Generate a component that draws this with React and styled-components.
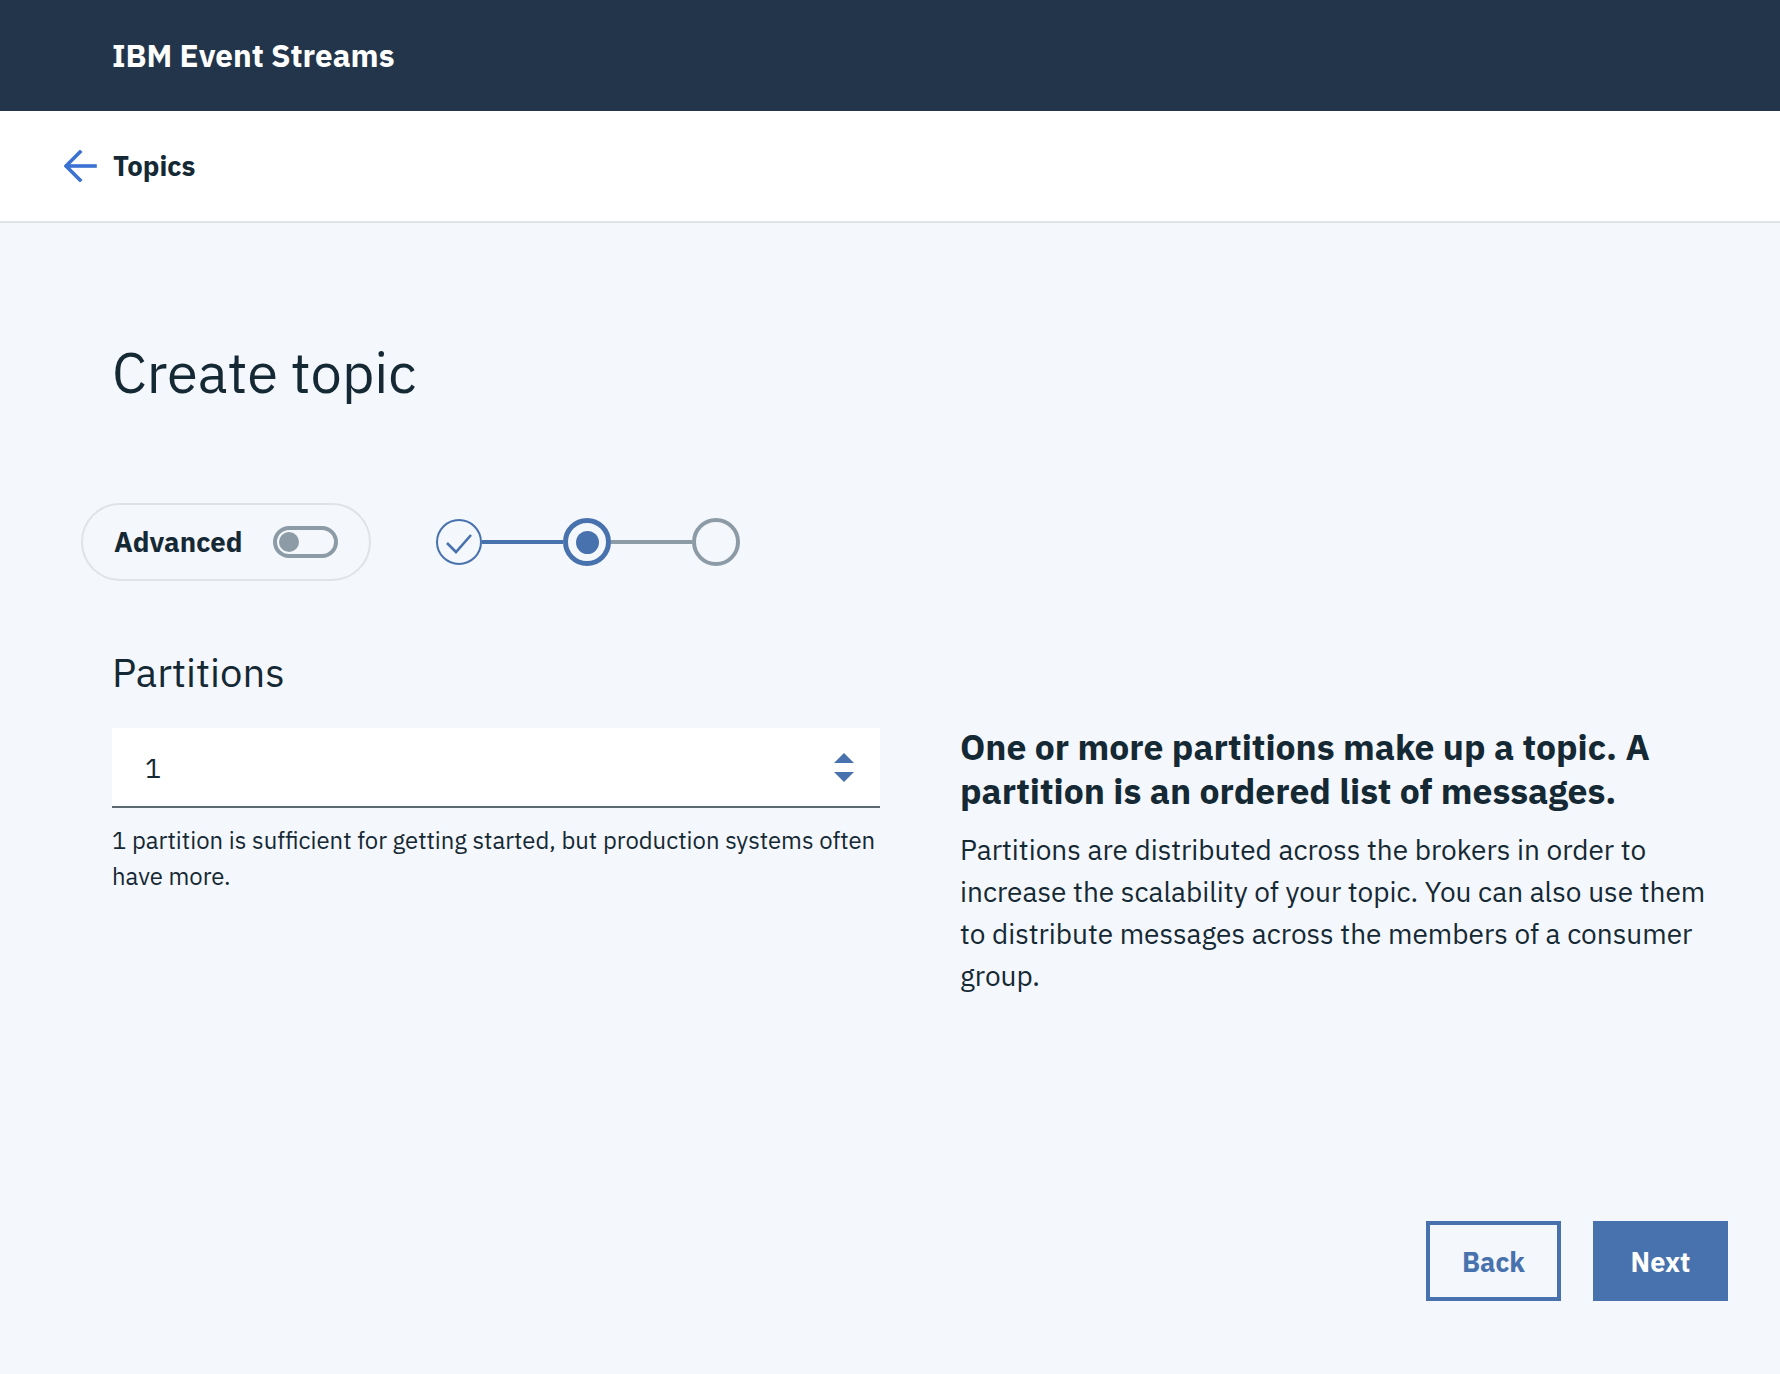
import styled, { createGlobalStyle } from 'styled-components';

const GlobalStyle = createGlobalStyle`
  * {
    margin: 0;
    padding: 0;
    box-sizing: border-box;
  }
  body {
    background: #f4f7fb;
    color: #152935;
    font-family: 'IBM Plex Sans', Roboto, 'Liberation Sans', sans-serif;
    -webkit-font-smoothing: antialiased;
  }
`

const Page = styled.div`
  min-height: 100vh;
  display: flex;
  flex-direction: column;
`

const Header = styled.header`
  height: 111px;
  background: #22354b;
  display: flex;
  align-items: center;
  padding-left: 112px;
`

const Brand = styled.h1`
  color: #ffffff;
  font-size: 31.4px;
  font-weight: 700;
`

const SubNav = styled.nav`
  height: 112px;
  background: #ffffff;
  border-bottom: 2px solid #dfe3e6;
  display: flex;
  align-items: center;
  padding-left: 64px;
  gap: 16px;
`

const BackLink = styled.span`
  font-size: 27.5px;
  font-weight: 700;
  color: #152935;
`

const Main = styled.main`
  flex: 1;
  display: flex;
  flex-direction: column;
  padding: 120px 52px 73px 112px;
`

const Title = styled.h2`
  font-size: 56px;
  font-weight: 400;
  line-height: 58px;
`

const Controls = styled.div`
  display: flex;
  align-items: center;
  gap: 65px;
  margin: 102px 0 0 -31px;
`

const Pill = styled.div`
  height: 78px;
  border: 2px solid #dfe3e6;
  border-radius: 40px;
  display: flex;
  align-items: center;
  gap: 31px;
  padding: 0 31px 0 31px;
`

const PillLabel = styled.span`
  font-size: 27.5px;
  font-weight: 700;
`

const Toggle = styled.div`
  width: 65px;
  height: 32px;
  border: 4px solid #8c9ba5;
  border-radius: 16px;
  display: flex;
  align-items: center;
  padding-left: 2px;

  &::before {
    content: '';
    width: 20px;
    height: 20px;
    border-radius: 50%;
    background: #8c9ba5;
  }
`

const Steps = styled.div`
  display: flex;
  align-items: center;
`

const StepCircle = styled.div`
  width: ${p => (p.$state === 'done' ? 46 : 48)}px;
  height: ${p => (p.$state === 'done' ? 46 : 48)}px;
  border-radius: 50%;
  border: ${p => (p.$state === 'done' ? 2 : p.$state === 'current' ? 5 : 4)}px solid
    ${p => (p.$state === 'todo' ? '#8c9ba5' : '#4872ad')};
  display: flex;
  align-items: center;
  justify-content: center;
`

const Dot = styled.div`
  width: 23px;
  height: 23px;
  border-radius: 50%;
  background: #4872ad;
`

const Connector = styled.div`
  width: 81px;
  height: 4px;
  background: ${p => (p.$active ? '#4872ad' : '#8c9ba5')};
`

const FieldLabel = styled.h3`
  font-size: 40px;
  font-weight: 400;
  line-height: 44px;
  margin-top: 69px;
`

const Columns = styled.div`
  display: grid;
  grid-template-columns: 768px 770px;
  column-gap: 80px;
  margin-top: 31px;
`

const Field = styled.div`
  padding-top: 3px;
`

const InputBox = styled.div`
  height: 80px;
  background: #ffffff;
  border-bottom: 2px solid #5a6872;
  display: flex;
  align-items: center;
  justify-content: space-between;
  padding: 0 26px 0 33px;
  font-size: 27px;
`

const Spinner = styled.div`
  display: flex;
  flex-direction: column;
  gap: 9px;
`

const Arrow = styled.div`
  width: 0;
  height: 0;
  border-left: 10px solid transparent;
  border-right: 10px solid transparent;
  ${p => (p.$up ? 'border-bottom' : 'border-top')}: 10px solid #4872ad;
`

const Helper = styled.p`
  font-size: 23.9px;
  line-height: 36px;
  margin-top: 15px;
`

const InfoHeading = styled.h4`
  font-size: 35.5px;
  font-weight: 700;
  line-height: 44px;
`

const InfoText = styled.p`
  font-size: 28px;
  line-height: 42px;
  margin-top: 16px;
`

const Actions = styled.div`
  margin-top: auto;
  display: flex;
  justify-content: flex-end;
  gap: 32px;
`

const Button = styled.button`
  width: 135px;
  height: 80px;
  font-family: inherit;
  font-size: 27px;
  font-weight: 700;
  border: 4px solid #4872ad;
  background: ${p => (p.$primary ? '#4872ad' : 'transparent')};
  color: ${p => (p.$primary ? '#ffffff' : '#4872ad')};
  cursor: pointer;
`

const BackArrow = () => (
  <svg width="33" height="32" viewBox="0 0 33 32" fill="none" stroke="#3a71d2" strokeWidth="3.6" strokeLinecap="square">
    <path d="M31 16H3" />
    <path d="M16 2L2 16l14 14" />
  </svg>
)

const Check = () => (
  <svg width="42" height="42" viewBox="0 0 42 42" fill="none" stroke="#4872ad" strokeWidth="2.6">
    <path d="M9 22l9 9 15-17" />
  </svg>
)

function App() {
  return (
    <>
      <GlobalStyle />
      <Page>
        <Header>
          <Brand>IBM Event Streams</Brand>
        </Header>
        <SubNav>
          <BackArrow />
          <BackLink>Topics</BackLink>
        </SubNav>
        <Main>
          <Title>Create topic</Title>
          <Controls>
            <Pill>
              <PillLabel>Advanced</PillLabel>
              <Toggle />
            </Pill>
            <Steps>
              <StepCircle $state="done"><Check /></StepCircle>
              <Connector $active />
              <StepCircle $state="current"><Dot /></StepCircle>
              <Connector />
              <StepCircle $state="todo" />
            </Steps>
          </Controls>
          <FieldLabel>Partitions</FieldLabel>
          <Columns>
            <Field>
              <InputBox>
                <span>1</span>
                <Spinner>
                  <Arrow $up />
                  <Arrow />
                </Spinner>
              </InputBox>
              <Helper>1 partition is sufficient for getting started, but production systems often have more.</Helper>
            </Field>
            <div>
              <InfoHeading>One or more partitions make up a topic. A partition is an ordered list of messages.</InfoHeading>
              <InfoText>
                Partitions are distributed across the brokers in order to increase the scalability of your topic. You can also use them to distribute messages across the members of a consumer group.
              </InfoText>
            </div>
          </Columns>
          <Actions>
            <Button>Back</Button>
            <Button $primary>Next</Button>
          </Actions>
        </Main>
      </Page>
    </>
  );
}

export default App;
